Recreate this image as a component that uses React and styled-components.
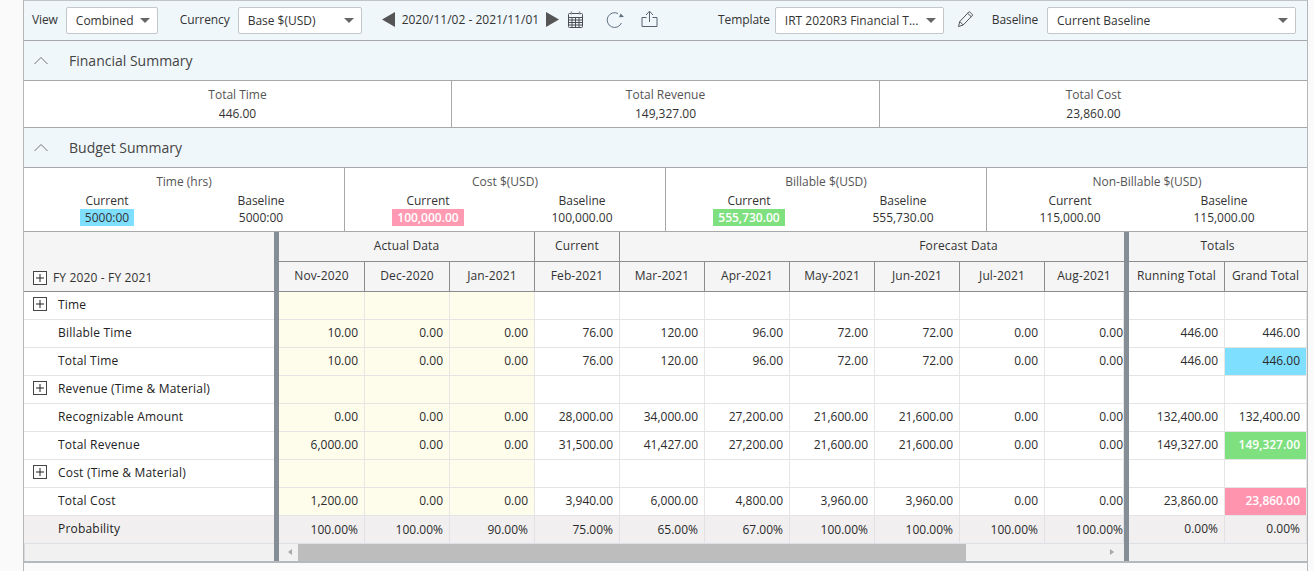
import React from 'react';
import styled, { createGlobalStyle } from 'styled-components';

const Global = createGlobalStyle`
  html, body { margin: 0; padding: 0; background: #fff; }
  body { font-family: "Open Sans", "Noto Sans", sans-serif; font-size: 12px; color: #2b2b2b; }
`;
const Page = styled.div`
  width: 1314px; height: 571px; overflow: hidden; background: #fafafa; display: flex; box-sizing: border-box; padding-left: 23px;
`;
const Shell = styled.div`
  width: 1285px; height: 571px; border-left: 1px solid #b4b7ba; border-right: 1px solid #b4b7ba; box-sizing: border-box; flex: none;
  display: flex; flex-direction: column; background: #fafafa;
`;
const Toolbar = styled.div`
  height: 41px; flex: none; box-sizing: border-box; background: #f0f7fb; border-top: 1px solid #c0c4c7; border-bottom: 1px solid #a6a8aa;
  display: flex; align-items: center; padding: 0 0 1px 8px; position: relative;
`;
const Label = styled.span`
  font-size: 12px; letter-spacing: -0.1px; color: #333; margin-right: ${p => p.$mr ?? 8}px; margin-left: ${p => p.$ml ?? 0}px; position: relative; top: -1px;
`;
const Select = styled.div`
  width: ${p => p.$w}px; height: 27px; box-sizing: border-box; background: #fff; border: 1px solid #c4c7ca; border-radius: 2px;
  display: flex; align-items: center; justify-content: space-between; padding: 0 7px 0 9px; font-size: 12px; color: #333; flex: none;
`;
const Caret = styled.i`
  width: 0; height: 0; border-left: 5px solid transparent; border-right: 5px solid transparent; border-top: 5px solid #666;
`;
const DateRange = styled.span`
  font-size: 12px; color: #333; margin: 0 7px 0 7px; position: relative; top: -1px;
`;
const IconSlot = styled.span`
  display: inline-flex; flex: none; margin-left: ${p => p.$ml ?? 0}px; margin-right: ${p => p.$mr ?? 0}px; position: relative; top: -1px;
`;
const SectionHead = styled.div`
  height: ${p => p.$h}px; flex: none; box-sizing: border-box; background: #f0f7fb; border-bottom: 1px solid #a6a8aa;
  display: flex; align-items: center; padding-left: 9px; font-size: 14px; color: #444; gap: 20px;
`;
const Summary3 = styled.div`
  height: 47px; flex: none; box-sizing: border-box; background: #fff; border-bottom: 1px solid #a6a8aa; display: grid; grid-template-columns: 427px 428px 1fr;
`;
const SummaryCell = styled.div`
  display: flex; flex-direction: column; align-items: center; justify-content: center; gap: 1px; line-height: 18px; font-size: 12px;
  & + & { border-left: 1px solid #a6a8aa; }
`;
const CellTitle = styled.div`
  color: #555;
`;
const CellValue = styled.div`
  color: #333;
`;
const Budget = styled.div`
  height: 64px; flex: none; box-sizing: border-box; background: #fff; border-bottom: 1px solid #a6a8aa; display: grid; grid-template-columns: 320px 321px 321px 1fr;
`;
const BudgetCell = styled.div`
  padding-top: 5px; text-align: center;
  & + & { border-left: 1px solid #a6a8aa; }
`;
const BudgetTitle = styled.div`
  line-height: 18px; color: #555; margin-bottom: 1px;
`;
const BudgetPair = styled.div`
  display: grid; grid-template-columns: 1fr 1fr; padding: 0 6px;
`;
const PairCol = styled.div`
  display: flex; flex-direction: column; align-items: center; line-height: 17px; color: #333;
`;
const Chip = styled.span`
  display: inline-block; padding: 0 5px; background: ${p => p.$bg || 'transparent'}; color: ${p => p.$fg || '#333'}; font-weight: ${p => p.$fg ? 600 : 400};
`;
const Grid = styled.div`
  flex: none; display: flex; height: 331px; background: #fff; border-bottom: 2px solid #b4b9be; box-sizing: border-box;
`;
const Frozen = styled.div`
  width: 250px; flex: none; display: flex; flex-direction: column;
`;
const Splitter = styled.div`
  width: 5px; flex: none; background: #858d96;
`;
const ScrollPane = styled.div`
  width: ${p => p.$w}px; flex: none; display: flex; flex-direction: column; overflow: hidden;
`;
const FrozenHead = styled.div`
  height: 60px; flex: none; box-sizing: border-box; background: #f5f5f5; border-bottom: 1px solid #8c8c8c;
  display: flex; align-items: flex-end; padding: 0 0 5px 9px; gap: 6px; font-size: 12px; color: #333; letter-spacing: 0.15px;
`;
const PlusBox = styled.span`
  width: 14px; height: 14px; box-sizing: border-box; border: 1px solid #444; flex: none; position: relative; background: #fff; margin-bottom: 1px;
  &::before { content: ''; position: absolute; left: 2px; right: 2px; top: 5px; height: 2px; transform: scaleY(.5); background: #222; }
  &::after { content: ''; position: absolute; top: 2px; bottom: 2px; left: 5px; width: 2px; transform: scaleX(.5); background: #222; }
`;
const RowLabel = styled.div`
  height: 28px; flex: none; box-sizing: border-box; border-bottom: 1px solid ${p => p.$band ? '#dcdfe3' : '#e4e4e4'}; background: ${p => p.$band ? '#f1eff0' : '#fff'};
  display: flex; align-items: center; gap: 11px; padding: 0 0 2px ${p => p.$tree ? 9 : 34}px; font-size: 12px; color: #222; letter-spacing: 0.2px;
`;
const HeadRow = styled.div`
  display: flex; height: ${p => p.$h}px; flex: none; box-sizing: border-box; background: #f5f5f5; border-bottom: 1px solid #8c8c8c;
`;
const HeadCell = styled.div`
  width: ${p => p.$w}px; flex: none; box-sizing: border-box; display: flex; align-items: center; justify-content: center; font-size: 12px; color: #333; letter-spacing: 0.12px; border-right: 1px solid ${p => p.$last ? 'transparent' : '#8c8c8c'}; padding-bottom: 2px;
`;
const DataRow = styled.div`
  display: flex; height: 28px; flex: none; box-sizing: border-box; border-bottom: 1px solid ${p => p.$band ? '#dcdfe3' : '#e4e4e4'}; background: ${p => p.$band ? '#f1eff0' : '#fff'};
`;
const DataCell = styled.div`
  width: ${p => p.$w}px; flex: none; box-sizing: border-box; display: flex; align-items: center; justify-content: flex-end; padding: 0 ${p => p.$pr ?? 6}px ${p => p.$low ? 0 : 2}px 0;
  font-size: 12px; color: #2b2b2b; border-right: 1px solid ${p => p.$band ? '#e2e2e4' : '#e6e6e6'};
  background: ${p => p.$bg || 'transparent'}; font-weight: ${p => p.$white ? 600 : 400};
  ${p => p.$white ? 'color: #fff;' : ''}
`;
const ScrollRow = styled.div`
  height: 17px; flex: none; background: #f1f1f1; border-left: 1px solid ${p => p.$edge ? '#d7dbe0' : 'transparent'}; box-sizing: border-box; position: relative;
`;
const ScrollArrow = styled.i`
  position: absolute; ${p => p.$right ? 'right: 10px;' : 'left: 8px;'} top: 5px; width: 0; height: 0;
  border-top: 3.5px solid transparent; border-bottom: 3.5px solid transparent;
  ${p => p.$right ? 'border-left: 4px solid #a8a8a8;' : 'border-right: 4px solid #a8a8a8;'}
`;
const Thumb = styled.div`
  position: absolute; left: 18px; width: 668px; top: 0; bottom: 0; background: #bdbdbd;
`;

const Tri = ({ left }) => (
  <svg width="13" height="15" viewBox="0 0 13 15"><path d={left ? 'M13 0V15L0 7.5Z' : 'M0 0V15L13 7.5Z'} fill="#555" /></svg>
);
const Calendar = () => (
  <svg width="17" height="17" viewBox="0 0 17 17" fill="none" stroke="#4a4f55" strokeWidth="1">
    <path d="M1.5 3.5Q1.5 2.5 2.5 2.5H14.5Q15.5 2.5 15.5 3.5V15.5Q15.5 16.5 14.5 16.5H2.5Q1.5 16.5 1.5 15.5Z" />
    <path d="M1.5 6.5H15.5M1.5 9H15.5M1.5 11.5H15.5M1.5 14H15.5M5 6.5V16.5M8.5 6.5V16.5M12 6.5V16.5" />
    <path d="M4.5 0.5V3.5M12.5 0.5V3.5" stroke="#8a8f94" strokeWidth="1.4" />
  </svg>
);
const Refresh = () => (
  <svg width="19" height="19" viewBox="0 0 19 19" fill="none" stroke="#5f7180" strokeWidth="1">
    <path d="M15.4 13A7.4 7.4 0 1 1 12 3.5" />
    <path d="M13 7.2L18 7L14.6 3.4Z" fill="#5f7180" stroke="none" />
  </svg>
);
const Share = () => (
  <svg width="17" height="18" viewBox="0 0 17 18" fill="none" stroke="#56636e" strokeWidth="1">
    <path d="M5.5 7.5H1V16.5H16V7.5H11.5" />
    <path d="M8.5 12V1.5" />
    <path d="M5 5L8.5 1.2L12 5" />
  </svg>
);
const Pencil = () => (
  <svg width="17" height="18" viewBox="0 0 17 18" fill="none" stroke="#555" strokeWidth="1">
    <path d="M1.5 16.5L2.8 11.5L12.2 1.6L15.8 5L6.2 15Z" />
    <path d="M2.8 11.5L6.2 15M10.6 3.3L14.2 6.7" />
  </svg>
);
const Chevron = () => (
  <svg width="16" height="9" viewBox="0 0 16 9" fill="none" stroke="#6f7478" strokeWidth="1"><path d="M1.5 8L8 1.5L14.5 8" /></svg>
);

const W = 85;
const months = ['Nov-2020','Dec-2020','Jan-2021','Feb-2021','Mar-2021','Apr-2021','May-2021','Jun-2021','Jul-2021','Aug-2021'];
const monthW = i => (i === 0 ? 86 : i === 9 ? 79 : W);
const rows = [
  { label: 'Time', tree: true, vals: Array(10).fill(''), tot: ['', ''] },
  { label: 'Billable Time', vals: ['10.00','0.00','0.00','76.00','120.00','96.00','72.00','72.00','0.00','0.00'], tot: ['446.00','446.00'] },
  { label: 'Total Time', vals: ['10.00','0.00','0.00','76.00','120.00','96.00','72.00','72.00','0.00','0.00'], tot: ['446.00','446.00'], grand: { bg: '#7fdfff' } },
  { label: 'Revenue (Time & Material)', tree: true, vals: Array(10).fill(''), tot: ['', ''] },
  { label: 'Recognizable Amount', vals: ['0.00','0.00','0.00','28,000.00','34,000.00','27,200.00','21,600.00','21,600.00','0.00','0.00'], tot: ['132,400.00','132,400.00'] },
  { label: 'Total Revenue', vals: ['6,000.00','0.00','0.00','31,500.00','41,427.00','27,200.00','21,600.00','21,600.00','0.00','0.00'], tot: ['149,327.00','149,327.00'], grand: { bg: '#7fe07f', white: true } },
  { label: 'Cost (Time & Material)', tree: true, vals: Array(10).fill(''), tot: ['', ''] },
  { label: 'Total Cost', vals: ['1,200.00','0.00','0.00','3,940.00','6,000.00','4,800.00','3,960.00','3,960.00','0.00','0.00'], tot: ['23,860.00','23,860.00'], grand: { bg: '#ff94ae', white: true } },
  { label: 'Probability', band: true, vals: ['100.00%','100.00%','90.00%','75.00%','65.00%','67.00%','100.00%','100.00%','100.00%','100.00%'], tot: ['0.00%','0.00%'] },
];
const budget = [
  { title: 'Time (hrs)', cur: '5000:00', base: '5000:00', bg: '#7fdfff' },
  { title: 'Cost $(USD)', cur: '100,000.00', base: '100,000.00', bg: '#ff9ab2', fg: '#fff' },
  { title: 'Billable $(USD)', cur: '555,730.00', base: '555,730.00', bg: '#7fe07f', fg: '#fff' },
  { title: 'Non-Billable $(USD)', cur: '115,000.00', base: '115,000.00' },
];

export default function App() {
  return (
    <Page>
      <Global />
      <Shell>
        <Toolbar>
          <Label>View</Label>
          <Select $w={92}>Combined<Caret /></Select>
          <Label $ml={22}>Currency</Label>
          <Select $w={124}>Base $(USD)<Caret /></Select>
          <IconSlot $ml={20}><Tri left /></IconSlot>
          <DateRange>2020/11/02 - 2021/11/01</DateRange>
          <IconSlot><Tri /></IconSlot>
          <IconSlot $ml={8}><Calendar /></IconSlot>
          <IconSlot $ml={22}><Refresh /></IconSlot>
          <IconSlot $ml={16}><Share /></IconSlot>
          <Label $ml={60} $mr={5}>Template</Label>
          <Select $w={169}>IRT 2020R3 Financial T...<Caret /></Select>
          <IconSlot $ml={13} $mr={18}><Pencil /></IconSlot>
          <Label $mr={9}>Baseline</Label>
          <Select $w={249}>Current Baseline<Caret /></Select>
        </Toolbar>
        <SectionHead $h={40}><Chevron />Financial Summary</SectionHead>
        <Summary3>
          <SummaryCell><CellTitle>Total Time</CellTitle><CellValue>446.00</CellValue></SummaryCell>
          <SummaryCell><CellTitle>Total Revenue</CellTitle><CellValue>149,327.00</CellValue></SummaryCell>
          <SummaryCell><CellTitle>Total Cost</CellTitle><CellValue>23,860.00</CellValue></SummaryCell>
        </Summary3>
        <SectionHead $h={40}><Chevron />Budget Summary</SectionHead>
        <Budget>
          {budget.map(b => (
            <BudgetCell key={b.title}>
              <BudgetTitle>{b.title}</BudgetTitle>
              <BudgetPair>
                <PairCol>Current<Chip $bg={b.bg} $fg={b.fg}>{b.cur}</Chip></PairCol>
                <PairCol>Baseline<Chip>{b.base}</Chip></PairCol>
              </BudgetPair>
            </BudgetCell>
          ))}
        </Budget>
        <Grid>
          <Frozen>
            <FrozenHead><PlusBox />FY 2020 - FY 2021</FrozenHead>
            {rows.map(r => (
              <RowLabel key={r.label} $tree={r.tree} $band={r.band}>{r.tree && <PlusBox />}{r.label}</RowLabel>
            ))}
            <ScrollRow $edge />
          </Frozen>
          <Splitter />
          <ScrollPane $w={845}>
            <HeadRow $h={30}>
              <HeadCell $w={256}>Actual Data</HeadCell>
              <HeadCell $w={W}>Current</HeadCell>
              <HeadCell $w={678} $last>Forecast Data</HeadCell>
            </HeadRow>
            <HeadRow $h={30}>
              {months.map((m, i) => <HeadCell key={m} $w={monthW(i)} $last={i === 9}>{m}</HeadCell>)}
            </HeadRow>
            {rows.map(r => (
              <DataRow key={r.label} $band={r.band}>
                {r.vals.map((v, i) => (
                  <DataCell key={i} $w={monthW(i)} $pr={i === 9 ? 0 : 6} $band={r.band} $low={r.band} $bg={!r.band && i < 3 ? '#fefdec' : undefined}>{v}</DataCell>
                ))}
              </DataRow>
            ))}
            <ScrollRow><ScrollArrow /><Thumb /><ScrollArrow $right /></ScrollRow>
          </ScrollPane>
          <Splitter />
          <ScrollPane $w={178}>
            <HeadRow $h={30}><HeadCell $w={178} $last>Totals</HeadCell></HeadRow>
            <HeadRow $h={30}>
              <HeadCell $w={96}>Running Total</HeadCell>
              <HeadCell $w={82} $last>Grand Total</HeadCell>
            </HeadRow>
            {rows.map(r => (
              <DataRow key={r.label} $band={r.band}>
                <DataCell $w={96} $band={r.band}>{r.tot[0]}</DataCell>
                <DataCell $w={82} $band={r.band} $bg={r.grand?.bg} $white={r.grand?.white}>{r.tot[1]}</DataCell>
              </DataRow>
            ))}
            <ScrollRow />
          </ScrollPane>
        </Grid>
      </Shell>
    </Page>
  );
}
